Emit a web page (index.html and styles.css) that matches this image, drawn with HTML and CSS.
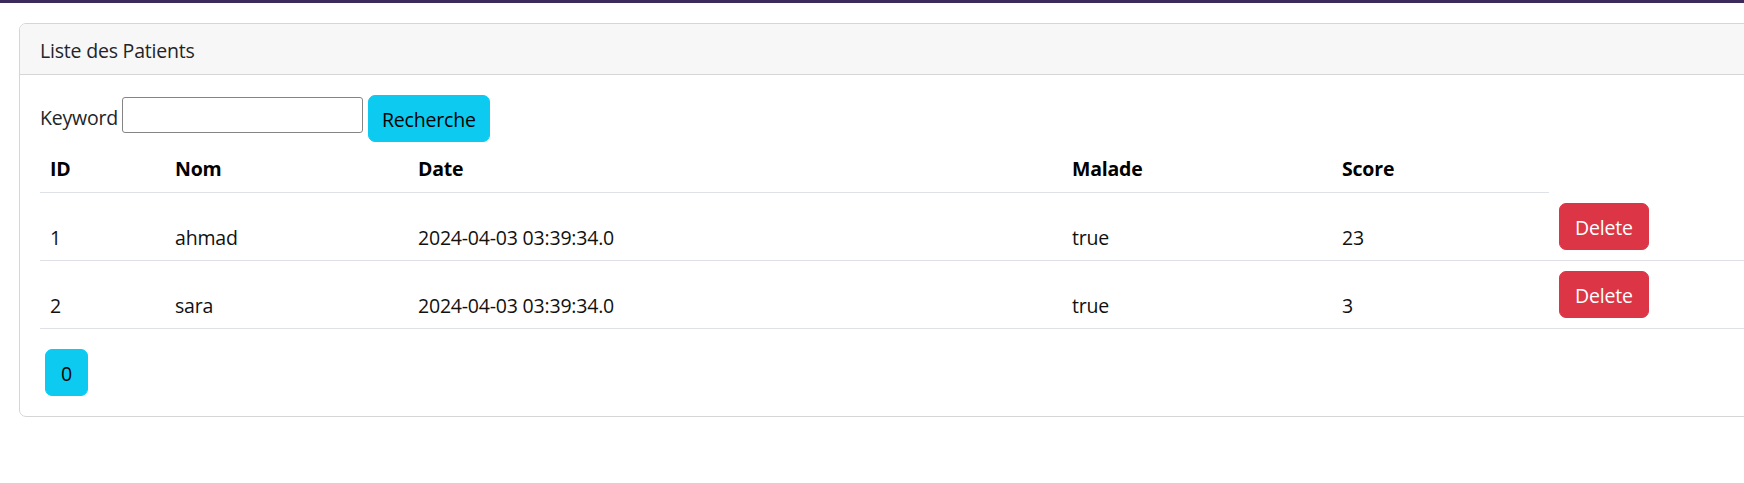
FILE: index.html
```html
<!DOCTYPE html>
<html lang="fr">
<head>
<meta charset="utf-8">
<title>Liste des Patients</title>
<link rel="stylesheet" href="styles.css">
</head>
<body>
<div class="topbar"></div>
<div class="page">
  <div class="card">
    <div class="card-header">Liste des Patients</div>
    <div class="card-body">
      <form class="search">
        <label class="search-label">Keyword</label>
        <input class="search-input" type="text" name="keyword">
        <button class="btn btn-info btn-search" type="button">Recherche</button>
      </form>
      <table class="table">
        <colgroup>
          <col class="c-id">
          <col class="c-nom">
          <col class="c-date">
          <col class="c-malade">
          <col class="c-score">
          <col class="c-action">
        </colgroup>
        <thead>
          <tr>
            <th>ID</th>
            <th>Nom</th>
            <th>Date</th>
            <th>Malade</th>
            <th>Score</th>
          </tr>
        </thead>
        <tbody>
          <tr>
            <td>1</td>
            <td>ahmad</td>
            <td>2024-04-03 03:39:34.0</td>
            <td>true</td>
            <td>23</td>
            <td class="action"><button class="btn btn-danger" type="button">Delete</button></td>
          </tr>
          <tr>
            <td>2</td>
            <td>sara</td>
            <td>2024-04-03 03:39:34.0</td>
            <td>true</td>
            <td>3</td>
            <td class="action"><button class="btn btn-danger" type="button">Delete</button></td>
          </tr>
        </tbody>
      </table>
      <ul class="pages">
        <li><button class="btn btn-info btn-page" type="button">0</button></li>
      </ul>
    </div>
  </div>
</div>
</body>
</html>
```

FILE: styles.css
```css
html, body {
  overflow: hidden;
}
body {
  margin: 0;
  font-family: "Open Sans", "Noto Sans", sans-serif;
  font-size: 19.5px;
  letter-spacing: -0.2px;
  line-height: 30px;
  color: #212529;
  background: #ffffff;
}
.topbar {
  height: 3px;
  background: #3b2a5c;
}
.page {
  padding: 20px 0 0 19px;
  width: 1800px;
}
.card {
  width: 1780px;
  border: 1px solid #d6d6d6;
  border-radius: 7px;
  background: #fff;
}
.card-header {
  padding: 12px 20px 8px 20px;
  background: #f7f7f7;
  border-bottom: 1px solid #d6d6d6;
  border-radius: 6px 6px 0 0;
}
.card-body {
  padding: 20px;
}
.search {
  display: flex;
  align-items: flex-start;
  gap: 5px;
  margin: 0;
}
.search-label {
  width: 77px;
  white-space: nowrap;
  padding-top: 8px;
}
.search-input {
  box-sizing: border-box;
  width: 241px;
  height: 36px;
  margin: 2px 0 0 0;
  padding: 1px 3px;
  border: 1px solid #858585;
  border-radius: 3px;
  font: inherit;
}
.btn {
  display: inline-block;
  vertical-align: top;
  font: inherit;
  letter-spacing: inherit;
  line-height: 30px;
  padding: 9px 15px 6px 15px;
  border: 1px solid transparent;
  border-radius: 7px;
  cursor: pointer;
}
.btn-search {
  padding-left: 13px;
  padding-right: 13px;
}
.btn-info {
  background: #0dcaf0;
  border-color: #0dcaf0;
  color: #000;
}
.btn-danger {
  background: #dc3545;
  border-color: #dc3545;
  color: #fff;
}
.table {
  width: 100%;
  table-layout: fixed;
  border-collapse: collapse;
  margin: 0 0 20px 0;
}
.c-id { width: 125px; }
.c-nom { width: 243px; }
.c-date { width: 654px; }
.c-malade { width: 270px; }
.c-score { width: 217px; }
.table th {
  text-align: left;
  font-weight: 700;
  color: #000;
  padding: 12px 10px 8px 10px;
  border-bottom: 1px solid #dee2e6;
}
.table td {
  padding: 13px 10px 7px 10px;
  vertical-align: bottom;
  border-bottom: 1px solid #dee2e6;
  color: #111;
}
.table td.action {
  padding: 10px;
}
.pages {
  list-style: none;
  margin: 0;
  padding: 0;
  display: flex;
}
.btn-page {
  margin-left: 5px;
}
```
